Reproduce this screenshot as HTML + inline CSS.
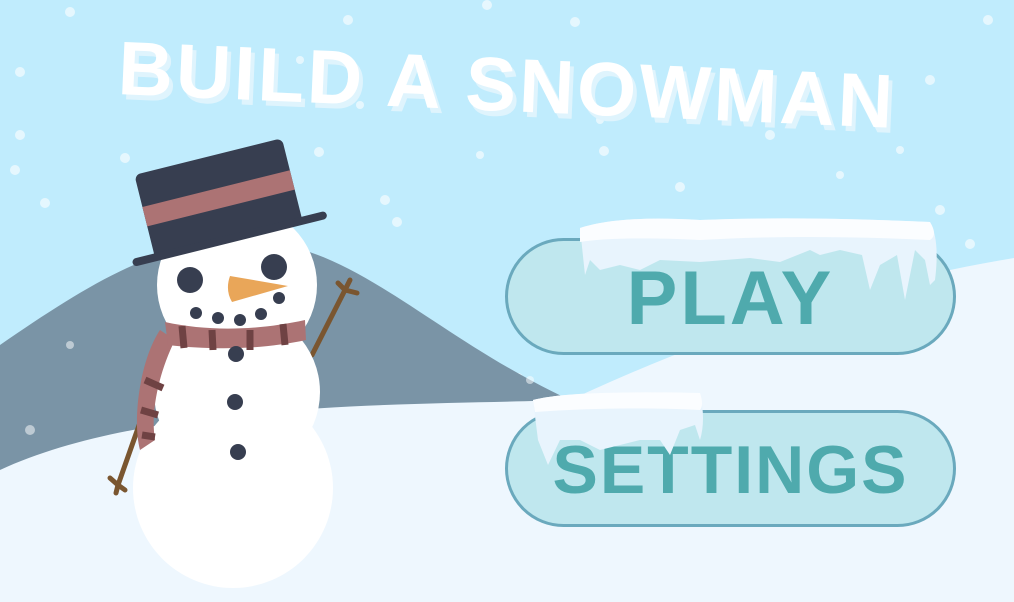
<!DOCTYPE html>
<html><head><style>
body{margin:0;width:1014px;height:602px;overflow:hidden;background:#c0ecfd;font-family:"Liberation Sans",sans-serif;position:relative}
.title{position:absolute;left:0;top:42px;width:1014px;text-align:center;font-weight:bold;font-size:76px;letter-spacing:3px;color:#fff;text-shadow:4px 5px 0 #dff4fd;transform:rotate(2.5deg)}
.btn{position:absolute;left:505px;width:451px;height:117px;border:3px solid #6aa9bd;border-radius:60px;background:#bfe7ee;color:#4faaad;font-weight:bold;text-align:center;box-sizing:border-box}
</style></head><body>
<svg width="1014" height="602" style="position:absolute;left:0;top:0">
<g fill="#fff" opacity=".6">
<circle cx="70" cy="12" r="5"/><circle cx="348" cy="20" r="5"/><circle cx="487" cy="5" r="5"/><circle cx="575" cy="22" r="5"/><circle cx="20" cy="72" r="5"/><circle cx="988" cy="20" r="5"/><circle cx="930" cy="80" r="5"/><circle cx="20" cy="135" r="5"/><circle cx="125" cy="158" r="5"/><circle cx="319" cy="152" r="5"/><circle cx="604" cy="151" r="5"/><circle cx="770" cy="135" r="5"/><circle cx="45" cy="203" r="5"/><circle cx="385" cy="200" r="5"/><circle cx="397" cy="222" r="5"/><circle cx="15" cy="170" r="5"/><circle cx="970" cy="244" r="5"/><circle cx="940" cy="210" r="5"/><circle cx="680" cy="187" r="5"/><circle cx="40" cy="350" r="5"/><circle cx="83" cy="388" r="5"/><circle cx="110" cy="406" r="5"/><circle cx="410" cy="345" r="5"/><circle cx="470" cy="385" r="5"/><circle cx="518" cy="378" r="5"/><circle cx="600" cy="120" r="4"/><circle cx="360" cy="105" r="4"/><circle cx="900" cy="150" r="4"/><circle cx="840" cy="175" r="4"/><circle cx="480" cy="155" r="4"/><circle cx="300" cy="60" r="4"/>
</g>
<path d="M0 345 C80 290 150 245 230 240 C350 235 420 330 570 400 L0 470Z" fill="#7a94a6"/>
<path d="M0 470 C150 400 420 405 570 400 C700 340 850 285 1014 258 L1014 602 L0 602Z" fill="#eef7fe"/>
<g fill="#fff" opacity=".5"><circle cx="30" cy="430" r="5"/><circle cx="70" cy="345" r="4"/><circle cx="530" cy="380" r="4"/></g>
<path d="M312 355 L345 290 M345 290 L338 283 M345 290 L357 293 M345 290 L350 280" stroke="#7a5630" stroke-width="5" stroke-linecap="round" fill="none"/>
<path d="M155 380 L118 485 M118 485 L110 478 M118 485 L125 490 M118 485 L116 493" stroke="#7a5630" stroke-width="5" stroke-linecap="round" fill="none"/>
<circle cx="233" cy="488" r="100" fill="#fff"/>
<circle cx="237" cy="392" r="83" fill="#fff"/>
<circle cx="237" cy="285" r="80" fill="#fff"/>
<path d="M160 330 C140 360 132 420 140 450 L155 440 C150 410 160 370 175 340Z" fill="#ac7374"/>
<path d="M165 322 C210 332 260 330 305 320 L306 340 C260 350 210 350 168 345Z" fill="#ac7374"/>
<g stroke="#6f4243" stroke-width="7"><line x1="182" y1="326" x2="184" y2="348"/><line x1="212" y1="330" x2="213" y2="350"/><line x1="250" y1="330" x2="250" y2="350"/><line x1="283" y1="324" x2="285" y2="345"/><line x1="145" y1="380" x2="163" y2="388"/><line x1="141" y1="410" x2="158" y2="415"/><line x1="142" y1="435" x2="155" y2="437"/></g>
<circle cx="190" cy="280" r="13" fill="#373e50"/><circle cx="274" cy="267" r="13" fill="#373e50"/>
<path d="M230 276 L288 286 L232 302 Q225 290 230 276Z" fill="#e9a659"/>
<g fill="#373e50"><circle cx="279" cy="298" r="6"/><circle cx="196" cy="313" r="6"/><circle cx="218" cy="318" r="6"/><circle cx="240" cy="320" r="6"/><circle cx="261" cy="314" r="6"/><circle cx="236" cy="354" r="8"/><circle cx="235" cy="402" r="8"/><circle cx="238" cy="452" r="8"/></g>
<g transform="rotate(-14 220 200)">
<rect x="143" y="155" width="152" height="88" rx="6" fill="#373e50"/>
<rect x="143" y="188" width="152" height="20" fill="#ac7374"/>
<rect x="120" y="236" width="200" height="8" rx="4" fill="#373e50"/>
</g>
</svg>
<div class="title">BUILD A SNOWMAN</div>
<div class="btn" style="top:238px;font-size:76px;line-height:116px;letter-spacing:3px">PLAY</div>
<div class="btn" style="top:410px;font-size:68px;line-height:114px;letter-spacing:2px">SETTINGS</div>
<svg width="1014" height="602" style="position:absolute;left:0;top:0">
<path d="M580 228 Q620 215 700 220 Q800 216 930 222 Q940 240 935 280 L930 285 L925 260 L915 250 L905 300 L897 255 L880 265 L870 290 L862 255 L840 250 L820 255 L810 250 L780 262 L750 258 L700 262 L660 260 L640 270 L620 265 L600 270 L590 260 L585 275 Z" fill="#e8f4fd"/>
<path d="M580 228 Q620 215 700 220 Q800 216 930 222 Q938 235 930 240 Q800 234 700 240 Q620 236 580 242Z" fill="#fbfdff"/>
<path d="M533 400 Q570 390 700 393 Q706 420 700 440 L695 425 L680 430 L670 455 L660 440 L640 440 L620 445 L600 450 L580 440 L560 440 L548 465 L538 440 Z" fill="#e8f4fd"/>
<path d="M533 400 Q570 390 700 393 Q704 405 700 410 Q620 406 535 412Z" fill="#fbfdff"/>
</svg>
</body></html>
